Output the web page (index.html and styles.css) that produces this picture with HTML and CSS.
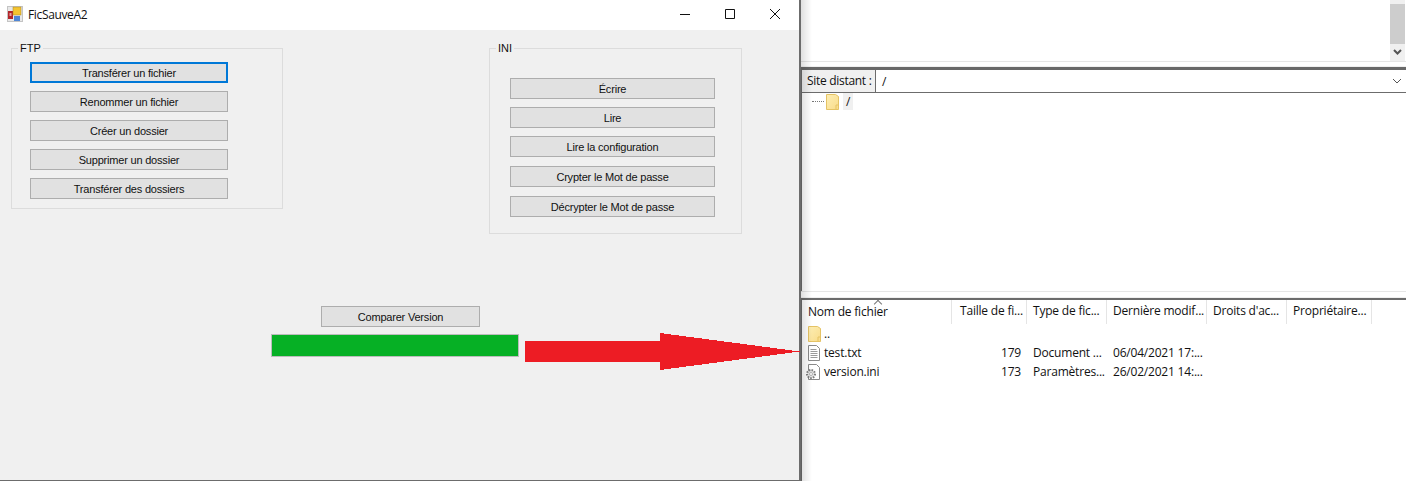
FILE: index.html
```html
<!DOCTYPE html>
<html lang="fr">
<head>
  <meta charset="UTF-8">
  <title>FicSauveA2</title>
  <link rel="stylesheet" href="styles.css">
</head>
<body>

  <div class="app-window">
    <div class="titlebar">
      <svg class="app-icon" width="16" height="16" viewBox="0 0 16 16">
        <rect x="0.5" y="0.5" width="15" height="15" fill="#e8e8e8" stroke="#c4c4c4"/>
        <rect x="1" y="5" width="5" height="8" fill="#b3262a"/>
        <rect x="2.5" y="7" width="2" height="3" fill="#e8a0a0"/>
        <rect x="6" y="1" width="8" height="8" fill="#f4c430" stroke="#a88420" stroke-width="0.5"/>
        <rect x="7" y="10" width="6" height="5" fill="#4f86d6"/>
      </svg>
      <span class="title">FicSauveA2</span>
      <div class="window-buttons">
        <svg width="10" height="10" viewBox="0 0 10 10"><path d="M0 5.500h10" stroke="#111" fill="none"/></svg>
        <svg width="10" height="10" viewBox="0 0 10 10"><path d="M.5.500h9v9h-9z" stroke="#111" fill="none"/></svg>
        <svg width="10" height="10" viewBox="0 0 10 10"><path d="M0 0l10 10M10 0L0 10" stroke="#111" fill="none"/></svg>
      </div>
    </div>

    <div class="form">
      <div class="groups">
        <fieldset class="group group-ftp">
          <legend>FTP</legend>
          <button class="btn btn-focus">Transférer un fichier</button>
          <button class="btn">Renommer un fichier</button>
          <button class="btn">Créer un dossier</button>
          <button class="btn">Supprimer un dossier</button>
          <button class="btn">Transférer des dossiers</button>
        </fieldset>

        <fieldset class="group group-ini">
          <legend>INI</legend>
          <button class="btn">Écrire</button>
          <button class="btn">Lire</button>
          <button class="btn">Lire la configuration</button>
          <button class="btn btn-gap">Crypter le Mot de passe</button>
          <button class="btn btn-gap">Décrypter le Mot de passe</button>
        </fieldset>
      </div>

      <div class="compare">
        <button class="btn btn-compare">Comparer Version</button>
        <div class="progress"></div>
      </div>
    </div>
  </div>

  <div class="client">
    <div class="top-pane">
      <div class="scrollbar">
        <div class="thumb"></div>
        <svg class="scroll-arrow" width="9" height="7" viewBox="0 0 9 7"><path d="M1 1l3.500 3.500L8 1" stroke="#555" stroke-width="2" fill="none"/></svg>
      </div>
    </div>
    <div class="sash"></div>

    <div class="remote">
      <div class="site-bar">
        <label class="site-label">Site distant :</label>
        <div class="site-input">
          <span>/</span>
          <svg width="10" height="6" viewBox="0 0 10 6"><path d="M1 1l4 4 4-4" stroke="#555" fill="none"/></svg>
        </div>
      </div>
      <div class="tree">
        <span class="dots"></span>
        <svg class="folder" width="13" height="16" viewBox="0 0 13 16"><use href="#folder-shape"/></svg>
        <span class="tree-name">/</span>
      </div>
    </div>

    <div class="sash sash-low"></div>

    <div class="listing">
      <div class="list-head">
        <span class="sort-mark"></span>
        <div class="col col-name">Nom de fichier</div>
        <div class="col col-size">Taille de fi...</div>
        <div class="col col-type">Type de fic...</div>
        <div class="col col-date">Dernière modif...</div>
        <div class="col col-perm">Droits d'ac...</div>
        <div class="col col-owner">Propriétaire...</div>
      </div>
      <div class="list-row">
        <div class="col col-name">
          <svg class="folder" width="13" height="16" viewBox="0 0 13 16"><use href="#folder-shape"/></svg>
          <span>..</span>
        </div>
      </div>
      <div class="list-row">
        <div class="col col-name">
          <svg class="file-icon" width="12" height="16" viewBox="0 0 12 16">
            <path d="M.5.500h8l3 3v12H.5z" fill="#fff" stroke="#8a8a8a"/>
            <path d="M2.500 4.500h6M2.500 6.500h7M2.500 8.500h7M2.500 10.500h7M2.500 12.500h7" stroke="#9a9a9a"/>
          </svg>
          <span>test.txt</span>
        </div>
        <div class="col col-size">179</div>
        <div class="col col-type">Document ...</div>
        <div class="col col-date">06/04/2021 17:...</div>
      </div>
      <div class="list-row">
        <div class="col col-name">
          <svg class="ini-icon" width="15" height="16" viewBox="0 0 15 16">
            <path d="M3.500.500h8l3 3v12h-11z" fill="#fff" stroke="#8a8a8a"/>
            <circle cx="6" cy="10" r="4" fill="#e4e4e4" stroke="#7c7c7c" stroke-width="2" stroke-dasharray="1.500 1.200"/>
            <circle cx="6" cy="10" r="1.500" fill="#fff" stroke="#8a8a8a" stroke-width="0.6"/>
          </svg>
          <span>version.ini</span>
        </div>
        <div class="col col-size">173</div>
        <div class="col col-type">Paramètres...</div>
        <div class="col col-date">26/02/2021 14:...</div>
      </div>
    </div>
  </div>

  <svg class="red-arrow" width="275" height="37" viewBox="0 0 275 37" shape-rendering="crispEdges">
    <path d="M0 8h135V0L275 18.500 135 37v-8H0z" fill="#ed1c24"/>
  </svg>

  <svg class="defs" width="0" height="0">
    <defs>
      <linearGradient id="folder-fill" x1="0" y1="0" x2="1" y2="1">
        <stop offset="0" stop-color="#fdeeb4"/>
        <stop offset="1" stop-color="#f9dc8a"/>
      </linearGradient>
      <g id="folder-shape">
        <path d="M.5.500h9l3 2v13H.5z" fill="url(#folder-fill)" stroke="#e5c365"/>
        <path d="M10 15v-4h2.500" fill="none" stroke="#e5c365"/>
      </g>
    </defs>
  </svg>

</body>
</html>
```

FILE: styles.css
```css
html, body {
  height: 481px;
  overflow: hidden;
}

body {
  margin: 0;
  display: flex;
  position: relative;
  background: #fff;
  font-family: "Open Sans", "Noto Sans", sans-serif;
  font-size: 12px;
  color: #111;
}

/* left: the winforms window */
.app-window {
  width: 799px;
  height: 480px;
  flex: none;
  background: #f0f0f0;
  border-right: 2px solid #6c6c6c;
  border-bottom: 1px solid #6c6c6c;
  display: flex;
  flex-direction: column;
}

.titlebar {
  height: 30px;
  flex: none;
  background: #fff;
  display: flex;
  align-items: center;
  padding-left: 7px;
}

.app-icon {
  margin-right: 5px;
  margin-top: -2px;
}

.title {
  margin-top: -1px;
  font-size: 12px;
  letter-spacing: -0.35px;
}

.window-buttons {
  margin-left: auto;
  display: flex;
  gap: 35px;
  padding-right: 19px;
  margin-top: -2px;
}

.form {
  flex: 1;
  display: flex;
  flex-direction: column;
}

.groups {
  display: flex;
  align-items: flex-start;
  padding: 12px 0 0 11px;
}

.group {
  margin: 0;
  min-width: 0;
  box-sizing: border-box;
  border: 1px solid #dcdcdc;
  display: flex;
  flex-direction: column;
  font-family: "Liberation Sans", Arial, sans-serif;
  font-size: 11px;
}

.group legend {
  padding: 0 2px;
  line-height: 13px;
}

.group-ftp {
  width: 272px;
  height: 167px;
  padding: 7px 0 0 18px;
  gap: 8px;
}

.group-ftp legend {
  margin-left: -12px;
}

.group-ini {
  width: 253px;
  height: 192px;
  margin-left: 206px;
  padding: 23px 0 0 20px;
  gap: 8px;
}

.group-ini legend {
  margin-left: -14px;
}

.group-ini .btn {
  width: 205px;
}

.group-ini .btn-gap {
  margin-top: 1px;
}

.btn {
  width: 198px;
  height: 21px;
  padding: 0;
  box-sizing: border-box;
  border: 1px solid #adadad;
  border-radius: 0;
  background: #e1e1e1;
  color: #111;
  font-family: "Liberation Sans", Arial, sans-serif;
  font-size: 11px;
  letter-spacing: -0.2px;
  flex: none;
}

.btn-focus {
  border: 2px solid #0078d7;
}

.compare {
  display: flex;
  flex-direction: column;
  padding: 72px 0 0 271px;
}

.btn-compare {
  width: 159px;
  margin-left: 50px;
}

.progress {
  width: 248px;
  height: 23px;
  margin-top: 7px;
  box-sizing: border-box;
  background: #06b025;
  border: 1px solid #bcbcbc;
}

/* right: the ftp client behind it */
.client {
  flex: 1;
  min-width: 0;
  display: flex;
  flex-direction: column;
  position: relative;
}

.client::before {
  content: "";
  position: absolute;
  top: 0;
  bottom: 0;
  left: 0;
  width: 11px;
  background: linear-gradient(to right, rgba(0, 0, 0, 0.12), rgba(0, 0, 0, 0));
  pointer-events: none;
}

.top-pane {
  height: 61px;
  flex: none;
  display: flex;
  justify-content: flex-end;
}

.scrollbar {
  width: 15px;
  margin-right: 1px;
  background: #f0f0f0;
  display: flex;
  flex-direction: column;
  align-items: center;
  padding-top: 4px;
}

.thumb {
  width: 15px;
  height: 40px;
  background: #cdcdcd;
}

.scroll-arrow {
  margin-top: 5px;
}

.sash {
  height: 6px;
  flex: none;
  background: #fff;
  border-top: 1px solid #e6e6e6;
  box-sizing: border-box;
  border-bottom: 1px solid #f0f0f0;
}

.remote {
  height: 224px;
  flex: none;
  border-top: 3px solid #696969;
  border-left: 1px solid #6c6c6c;
  box-sizing: border-box;
}

.site-bar {
  height: 22px;
  display: flex;
  border-bottom: 1px solid #6c6c6c;
}

.site-label {
  width: 74px;
  background: #f0f0f0;
  padding-left: 5px;
  box-sizing: border-box;
  border-right: 1px solid #6c6c6c;
  line-height: 21px;
  letter-spacing: -0.3px;
}

.site-input {
  flex: 1;
  display: flex;
  align-items: center;
  justify-content: space-between;
  padding: 0 4px 0 6px;
  line-height: 21px;
}

.tree {
  display: flex;
  align-items: center;
  height: 17px;
  padding-left: 10px;
}

.dots {
  width: 12px;
  border-top: 1px dotted #777;
  margin-right: 2px;
}

.tree-name {
  margin-left: 4px;
  padding: 0 3px;
  background: #f0f0f0;
}

.sash-low {
  height: 7px;
}

.listing {
  flex: 1;
  border-top: 2px solid #6c6c6c;
  border-left: 1px solid #6c6c6c;
}

.list-head {
  position: relative;
  display: flex;
  height: 24px;
  line-height: 22px;
}

.sort-mark {
  position: absolute;
  left: 73px;
  top: 1px;
  width: 5px;
  height: 5px;
  border-top: 1px solid #777;
  border-left: 1px solid #777;
  transform: rotate(45deg);
}

.list-head .col {
  border-right: 1px solid #e5e5e5;
  white-space: nowrap;
}

.list-head .col-size {
  text-align: left;
  padding-left: 8px;
}

.list-row {
  display: flex;
  height: 19px;
  line-height: 19px;
  align-items: center;
}

.col {
  flex: none;
  padding-left: 6px;
  box-sizing: border-box;
  letter-spacing: -0.2px;
}

.col-name {
  width: 150px;
  display: flex;
  align-items: center;
  gap: 4px;
  padding-left: 6px;
}

.col-size {
  width: 75px;
  text-align: right;
  padding-right: 6px;
}

.col-type {
  width: 80px;
  white-space: nowrap;
  overflow: hidden;
}

.col-date {
  width: 100px;
  white-space: nowrap;
}

.col-perm {
  width: 80px;
}

.col-owner {
  width: 85px;
}

.list-row .folder {
  margin-right: -1px;
}

.ini-icon {
  margin-left: -3px;
}

.red-arrow {
  position: absolute;
  left: 525px;
  top: 333px;
}

.defs {
  position: absolute;
}
```
